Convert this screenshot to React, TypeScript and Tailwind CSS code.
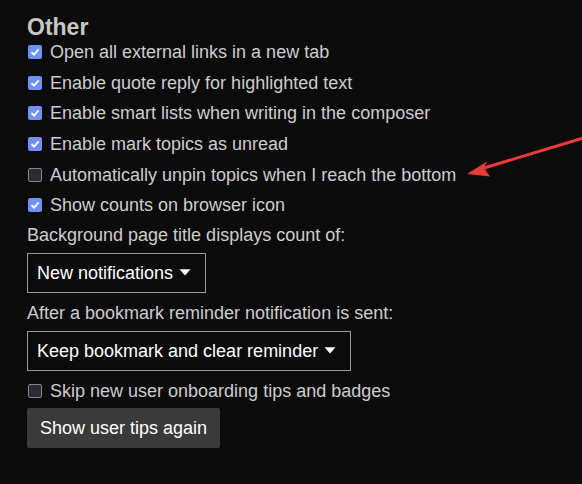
import React from "react";

const rows: { label: string; checked: boolean }[] = [
  { label: "Open all external links in a new tab", checked: true },
  { label: "Enable quote reply for highlighted text", checked: true },
  { label: "Enable smart lists when writing in the composer", checked: true },
  { label: "Enable mark topics as unread", checked: true },
  { label: "Automatically unpin topics when I reach the bottom", checked: false },
  { label: "Show counts on browser icon", checked: true },
];

function Box({ checked }: { checked: boolean }) {
  return checked ? (
    <span className="flex h-[14px] w-[14px] shrink-0 items-center justify-center rounded-[2px] bg-[#7191f8]">
      <svg width="10" height="10" viewBox="0 0 10 10">
        <path d="M1.5 5.2 L4 7.6 L8.6 2.4" fill="none" stroke="#fff" strokeWidth="1.8" />
      </svg>
    </span>
  ) : (
    <span className="h-[14px] w-[14px] shrink-0 rounded-[2px] border border-[#85858c] bg-[#2b2b36]" />
  );
}

function CheckRow({ label, checked }: { label: string; checked: boolean }) {
  return (
    <div className="flex h-[30.6px] items-center gap-[8px] pl-[1px]">
      <Box checked={checked} />
      <span className="leading-[20px]">{label}</span>
    </div>
  );
}

function Caret() {
  return (
    <svg width="12" height="7" viewBox="0 0 12 7" className="ml-[6px]">
      <path d="M0.5 0.3 H11.5 L6 6.6 Z" fill="#fff" />
    </svg>
  );
}

function Select({ value, width }: { value: string; width: string }) {
  return (
    <div
      className={`flex h-[40px] items-center border border-[#9a9a9a] pl-[9px] text-white ${width}`}
    >
      <span className="leading-[20px]">{value}</span>
      <Caret />
    </div>
  );
}

export default function App() {
  return (
    <div
      className="relative h-[484px] w-[582px] overflow-hidden bg-[#0b0b0b] text-[18px] text-[#cdcdcd]"
      style={{ fontFamily: '"Liberation Sans", Arial, sans-serif' }}
    >
      <div className="flex flex-col items-start pl-[27px] pt-[16px]">
        <h2 className="mb-[-2px] text-[23px] font-bold leading-[23px] text-[#c6c6c6]">Other</h2>
        {rows.map((r) => (
          <CheckRow key={r.label} label={r.label} checked={r.checked} />
        ))}
        <p className="mt-[4px] leading-[20px]">Background page title displays count of:</p>
        <div className="mt-[8px]">
          <Select value="New notifications" width="w-[179px]" />
        </div>
        <p className="mt-[10.7px] leading-[20px]">After a bookmark reminder notification is sent:</p>
        <div className="mt-[7.3px]">
          <Select value="Keep bookmark and clear reminder" width="w-[324px]" />
        </div>
        <div className="mt-[5.5px]">
          <CheckRow label="Skip new user onboarding tips and badges" checked={false} />
        </div>
        <button className="mt-[1px] flex h-[40px] items-center whitespace-nowrap rounded-[2px] bg-[#3a3a3a] px-[13px] leading-[20px] text-white">
          Show user tips again
        </button>
      </div>

      <svg className="absolute left-0 top-0" width="582" height="484" viewBox="0 0 582 484">
        <line x1="590" y1="136" x2="484" y2="168" stroke="#ea3b3b" strokeWidth="3" />
        <path d="M467 174 L487 161.5 L484 168 L490 176.5 Z" fill="#ea3b3b" />
      </svg>
    </div>
  );
}
